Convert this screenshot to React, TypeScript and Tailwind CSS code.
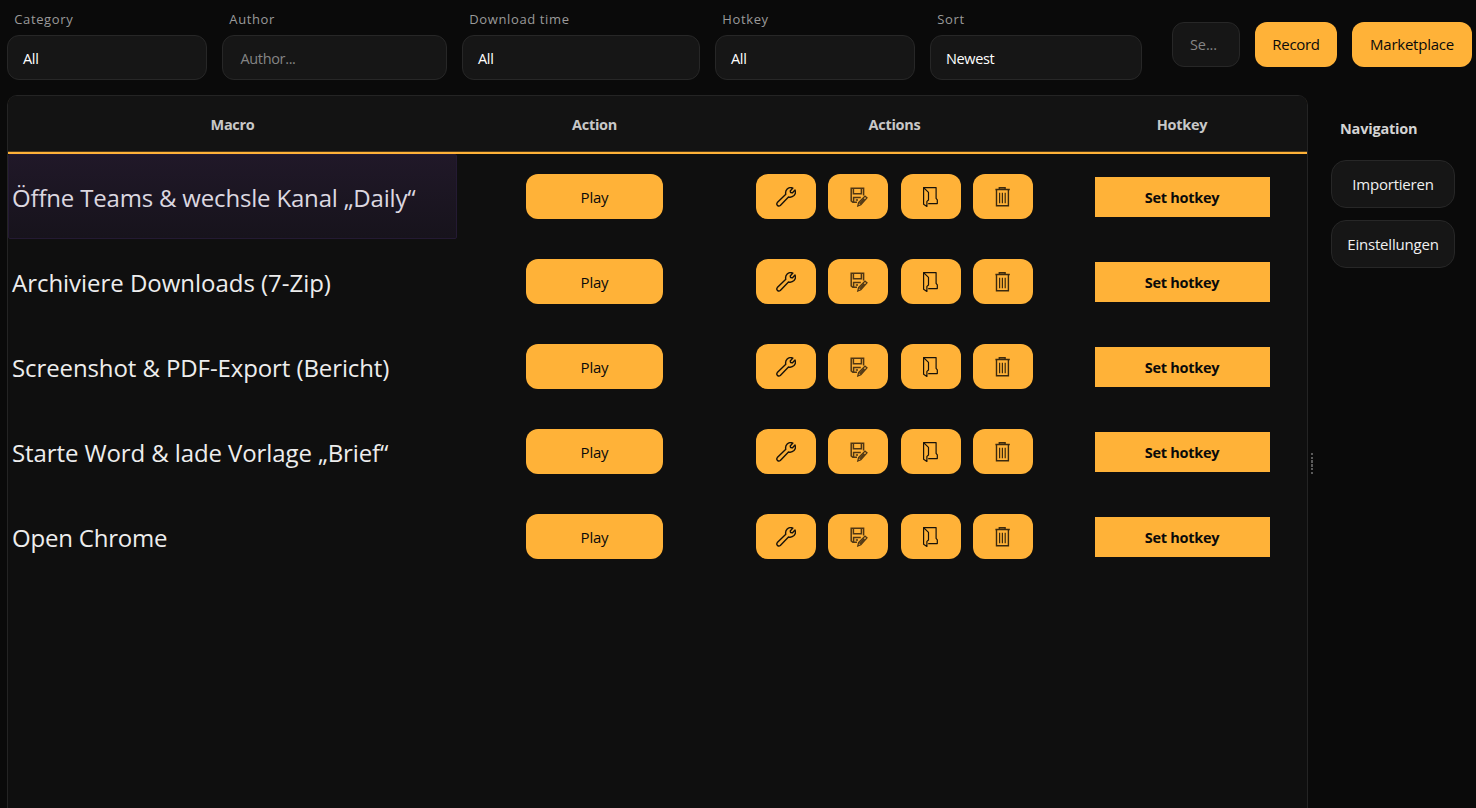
import React from "react";

const filters = [
  { label: "Category", value: "All", width: "w-[200px]", muted: false },
  { label: "Author", value: "Author...", width: "w-[225px]", muted: true },
  { label: "Download time", value: "All", width: "w-[238px]", muted: false },
  { label: "Hotkey", value: "All", width: "w-[200px]", muted: false },
  { label: "Sort", value: "Newest", width: "w-[212px]", muted: false },
];

const macros = [
  { name: "Öffne Teams & wechsle Kanal „Daily“", tracking: "tracking-[-0.18px]" },
  { name: "Archiviere Downloads (7-Zip)", tracking: "tracking-[-0.03px]" },
  { name: "Screenshot & PDF-Export (Bericht)", tracking: "tracking-[-0.1px]" },
  { name: "Starte Word & lade Vorlage „Brief“", tracking: "tracking-[-0.1px]" },
  { name: "Open Chrome", tracking: "tracking-[-0.2px]" },
];

const columns = "grid grid-cols-[449px_275px_325px_250px]";

function WrenchIcon() {
  return (
    <svg width="20" height="20" viewBox="0 0 20 20" fill="none" stroke="#17120a" strokeWidth="1.4" strokeLinejoin="round">
      <path d="M16.9 1.1 14.2 3.9 14.6 5.5 16.3 5.9 19 3.1C19.8 5 19.5 7 18 8.6 16.5 10.1 14.5 10.5 12.5 10L4.3 18.5A2.1 2.1 0 0 1 1.3 15.6L9.8 7.2C9.3 5.3 9.8 3.4 11.2 2 12.8.6 15 .3 16.9 1.1Z" />
    </svg>
  );
}

function SaveEditIcon() {
  return (
    <svg width="20" height="20" viewBox="-2 0 20 20" fill="none" stroke="#503714" strokeWidth="1.5">
      <path d="M13.6 8.4V1.2H1.2v12.6l1.6 1.4H7" />
      <path d="M3.4 1.2v5.6h8V1.2M3.6 15v-4.4h7.2M5.8 12.9H8" />
      <path d="m7.8 19 .8-3.3 6.4-6.6 2 1.8-6.1 6.9ZM9.6 17l4.8-5.2" strokeWidth="1.3" />
    </svg>
  );
}

function FolderIcon() {
  return (
    <svg width="15" height="20" viewBox="0 0 15 20" fill="none" stroke="#17120a" strokeWidth="1.2" strokeLinejoin="round">
      <path d="M.6.6h12.5v10.8l1.2 1.4v3.8H5.2" />
      <path d="M.6.6v16.6l3.3 2.2v-5L5.5 13V5.4Z" />
    </svg>
  );
}

function TrashIcon() {
  return (
    <svg width="16" height="20" viewBox="0 0 16 20" fill="none" stroke="#3c2a0e" strokeWidth="1.4">
      <path d="M.4 2.5h14.4M4.3 2.4V.8h5.8v1.6" />
      <path d="M1.5 3v15.7h11.9V3" />
      <path d="M4.6 5.8v10.4M7.4 5.8v10.4M10.2 5.8v10.4" strokeWidth="1.2" />
    </svg>
  );
}

const tools = [
  { name: "edit", icon: <WrenchIcon /> },
  { name: "rename", icon: <SaveEditIcon /> },
  { name: "folder", icon: <FolderIcon /> },
  { name: "delete", icon: <TrashIcon /> },
];

export default function App() {
  return (
    <div className="flex h-[808px] w-[1476px] flex-col overflow-hidden bg-[#0a0a0a] font-['Open_Sans','Noto_Sans',sans-serif] text-[14.5px] text-white">
      <header className="flex h-[95px] shrink-0 pl-[7px]">
        <div className="flex gap-[15px] pt-[9px]">
          {filters.map((f) => (
            <div key={f.label} className={`${f.width} shrink-0`}>
              <div className="h-[26px] pl-[7.3px] text-[13px] leading-[20px] tracking-[0.62px] text-[#9a9a9a]">{f.label}</div>
              <div
                className={`flex h-[45px] items-center rounded-[12px] border border-[#272727] bg-[#161616] pt-[2px] tracking-[-0.35px] ${
                  f.muted ? "pl-[17.5px] text-[#858585]" : "pl-[15px] text-white"
                }`}
              >
                {f.value}
              </div>
            </div>
          ))}
        </div>
        <div className="ml-[30px] flex gap-[15px] pt-[22px]">
          <div className="flex h-[45px] w-[68px] items-center rounded-[12px] border border-[#272727] bg-[#161616] pl-[17px] tracking-[-0.1px] text-[#858585]">
            Se...
          </div>
          <button className="h-[45px] w-[82px] rounded-[12px] bg-[#ffb238] text-[15px] tracking-[-0.3px] text-[#0a0a0a]">Record</button>
          <button className="h-[45px] w-[120px] rounded-[12px] bg-[#ffb238] text-[15px] tracking-[-0.25px] text-[#0a0a0a]">Marketplace</button>
        </div>
      </header>

      <main className="flex min-h-0 flex-1 pl-[7px]">
        <section className="flex w-[1301px] shrink-0 flex-col rounded-t-[10px] border border-b-0 border-[#242424] bg-[#0f0f0f]">
          <div className={`${columns} h-[58px] shrink-0 items-center rounded-t-[8px] border-b-2 border-[#ffb238] bg-[#131313] pt-px text-center font-bold tracking-[-0.3px] text-[#c8c8c8] shadow-[inset_0_-1px_0_#4d3a1b]`}>
            <div>Macro</div>
            <div>Action</div>
            <div>Actions</div>
            <div>Hotkey</div>
          </div>
          {macros.map((m, i) => (
            <div key={m.name} className={`${columns} h-[85px] shrink-0 items-center`}>
              <div
                className={`flex h-full items-center border pb-px pl-[3px] text-[24px] whitespace-nowrap ${m.tracking} ${
                  i === 0
                    ? "rounded-[2px] border-[#241a33] bg-linear-to-b from-[#201828] to-[#17131c] text-[#dcd8e0]"
                    : "border-transparent text-[#ededed]"
                }`}
              >
                <span className="pt-[3px]">{m.name}</span>
              </div>
              <div className="flex justify-center">
                <button className="h-[45px] w-[137px] rounded-[12px] bg-[#ffb238] pt-[2px] text-[15px] tracking-[-0.2px] text-[#0a0a0a]">Play</button>
              </div>
              <div className="flex justify-center gap-[12.4px]">
                {tools.map((t) => (
                  <button key={t.name} aria-label={t.name} className="flex h-[45px] w-[60px] items-center justify-center rounded-[12px] bg-[#ffb238]">
                    {t.icon}
                  </button>
                ))}
              </div>
              <div className="flex justify-center">
                <button className="h-[40px] w-[175px] bg-[#ffb238] pt-[2px] font-bold tracking-[-0.28px] text-[#0a0a0a]">Set hotkey</button>
              </div>
            </div>
          ))}
        </section>

        <div className="flex w-[23px] shrink-0 flex-col items-start gap-px pt-[358px] pl-[3px]">
          <i className="h-[2px] w-[2px] bg-[#5a5a5a]" />
          <i className="mt-[1px] h-[2px] w-[2px] bg-[#5a5a5a]" />
          <i className="h-[3px] w-[2px] bg-[#5a5a5a]" />
          <i className="h-[3px] w-[2px] bg-[#5a5a5a]" />
          <i className="h-[2px] w-[2px] bg-[#5a5a5a]" />
          <i className="mt-[1px] h-[2px] w-[2px] bg-[#5a5a5a]" />
        </div>

        <aside className="w-[124px] pt-[24px]">
          <h2 className="h-[41px] pl-[9px] leading-[20px] font-bold tracking-[-0.2px] text-[#d4d4d4]">Navigation</h2>
          <div className="flex flex-col gap-[12px]">
            <button className="h-[48px] rounded-[15px] border border-[#272727] bg-[#161616] text-[15px] tracking-[-0.2px] text-[#f0f0f0]">Importieren</button>
            <button className="h-[48px] rounded-[15px] border border-[#272727] bg-[#161616] text-[15px] tracking-[-0.2px] text-[#f0f0f0]">Einstellungen</button>
          </div>
        </aside>
      </main>
    </div>
  );
}
